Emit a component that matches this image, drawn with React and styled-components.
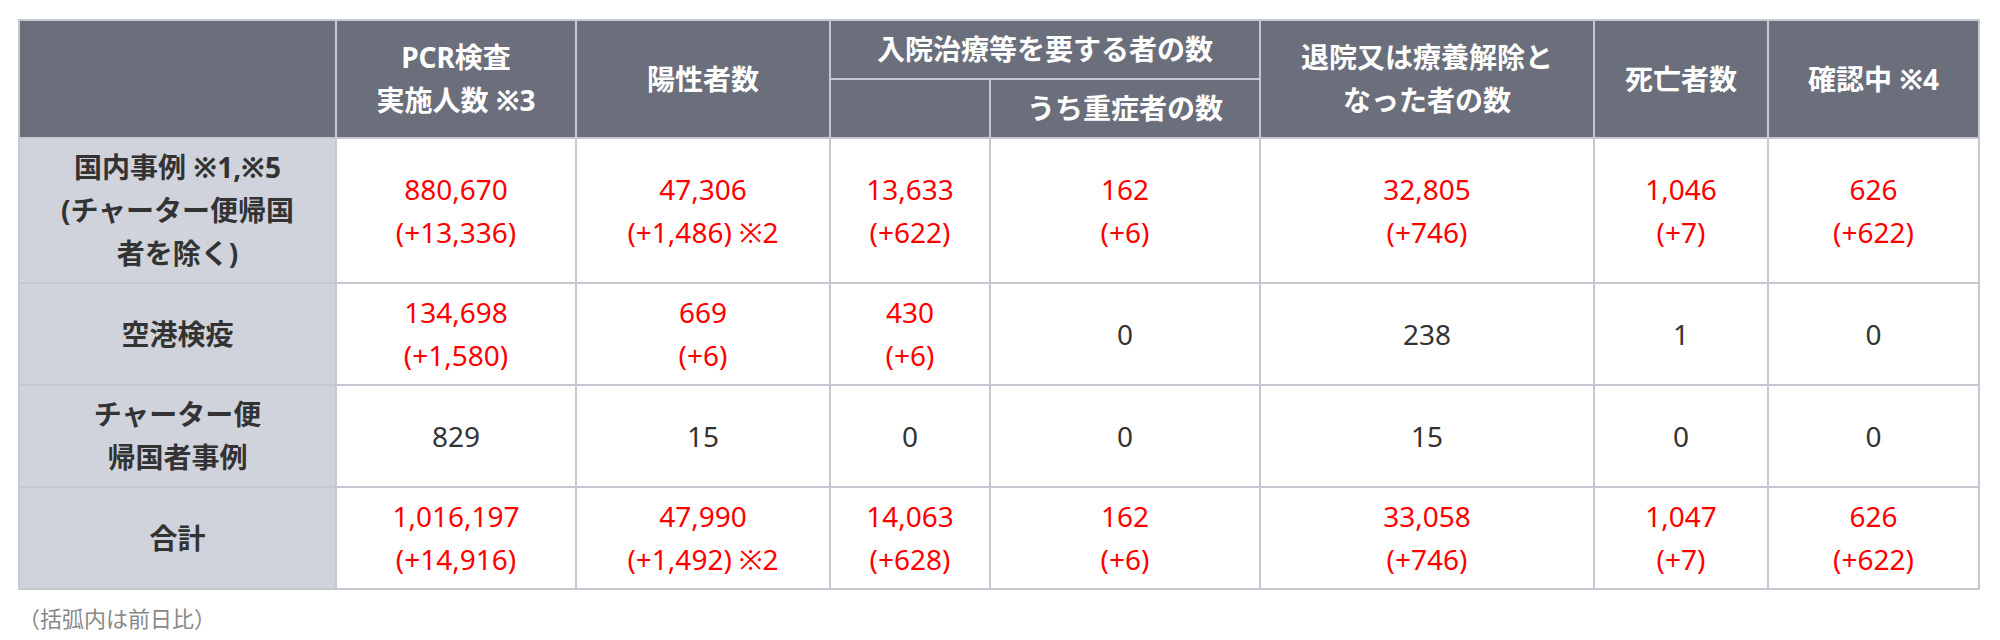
import React from "react";
import styled, { createGlobalStyle } from "styled-components";

const Global = createGlobalStyle`
  html, body { margin: 0; padding: 0; background: #ffffff; }
  body {
    font-family: "Noto Sans", "Noto Sans CJK JP", "Liberation Sans", sans-serif;
    color: #333333;
  }
`;

const Page = styled.div`
  padding: 19px 0 0 18px;
  width: 1960px;
`;

const Table = styled.table`
  width: 1960px;
  border-collapse: collapse;
  table-layout: fixed;
  border: 2px solid #c5c8d0;
  font-size: 28px;
  line-height: 43px;
`;

const HeadCell = styled.th`
  background: #6b6f7c;
  color: #ffffff;
  font-weight: 700;
  text-align: center;
  vertical-align: middle;
  padding: 7px 6px;
  border: 2px solid #c5c8d0;
`;

const RowHead = styled.th`
  background: #d0d3dc;
  color: #333333;
  font-weight: 700;
  text-align: center;
  vertical-align: middle;
  padding: 7px 6px;
  border: 2px solid #c5c8d0;
`;

const Cell = styled.td`
  background: #ffffff;
  color: ${(p) => (p.$red ? "#ff0000" : "#333333")};
  text-align: center;
  vertical-align: middle;
  padding: 7px 6px;
  border: 2px solid #c5c8d0;
`;

const Note = styled.p`
  margin: 12px 0 0 0;
  font-family: "Noto Sans CJK JP", sans-serif;
  font-size: 22px;
  line-height: 30px;
  color: #888888;
`;

const widths = [317, 240, 254, 160, 270, 334, 174, 211];

const rows = [
  {
    head: ["国内事例 ※1,※5", "(チャーター便帰国", "者を除く)"],
    cells: [
      ["880,670", "(+13,336)"],
      ["47,306", "(+1,486) ※2"],
      ["13,633", "(+622)"],
      ["162", "(+6)"],
      ["32,805", "(+746)"],
      ["1,046", "(+7)"],
      ["626", "(+622)"],
    ],
    red: [1, 1, 1, 1, 1, 1, 1],
  },
  {
    head: ["空港検疫"],
    cells: [
      ["134,698", "(+1,580)"],
      ["669", "(+6)"],
      ["430", "(+6)"],
      ["0"],
      ["238"],
      ["1"],
      ["0"],
    ],
    red: [1, 1, 1, 0, 0, 0, 0],
  },
  {
    head: ["チャーター便", "帰国者事例"],
    cells: [["829"], ["15"], ["0"], ["0"], ["15"], ["0"], ["0"]],
    red: [0, 0, 0, 0, 0, 0, 0],
  },
  {
    head: ["合計"],
    cells: [
      ["1,016,197", "(+14,916)"],
      ["47,990", "(+1,492) ※2"],
      ["14,063", "(+628)"],
      ["162", "(+6)"],
      ["33,058", "(+746)"],
      ["1,047", "(+7)"],
      ["626", "(+622)"],
    ],
    red: [1, 1, 1, 1, 1, 1, 1],
  },
];

const Lines = ({ lines }) =>
  lines.map((l, i) => (
    <React.Fragment key={i}>
      {i > 0 && <br />}
      {l}
    </React.Fragment>
  ));

export default function App() {
  return (
    <Page>
      <Global />
      <Table>
        <colgroup>
          {widths.map((w, i) => (
            <col key={i} style={{ width: w }} />
          ))}
        </colgroup>
        <thead>
          <tr>
            <HeadCell rowSpan={2}></HeadCell>
            <HeadCell rowSpan={2}>
              PCR検査
              <br />
              実施人数 ※3
            </HeadCell>
            <HeadCell rowSpan={2}>陽性者数</HeadCell>
            <HeadCell colSpan={2}>入院治療等を要する者の数</HeadCell>
            <HeadCell rowSpan={2}>
              退院又は療養解除と
              <br />
              なった者の数
            </HeadCell>
            <HeadCell rowSpan={2}>死亡者数</HeadCell>
            <HeadCell rowSpan={2}>確認中 ※4</HeadCell>
          </tr>
          <tr>
            <HeadCell></HeadCell>
            <HeadCell>うち重症者の数</HeadCell>
          </tr>
        </thead>
        <tbody>
          {rows.map((r, ri) => (
            <tr key={ri}>
              <RowHead>
                <Lines lines={r.head} />
              </RowHead>
              {r.cells.map((c, ci) => (
                <Cell key={ci} $red={!!r.red[ci]}>
                  <Lines lines={c} />
                </Cell>
              ))}
            </tr>
          ))}
        </tbody>
      </Table>
      <Note>（括弧内は前日比）</Note>
    </Page>
  );
}
